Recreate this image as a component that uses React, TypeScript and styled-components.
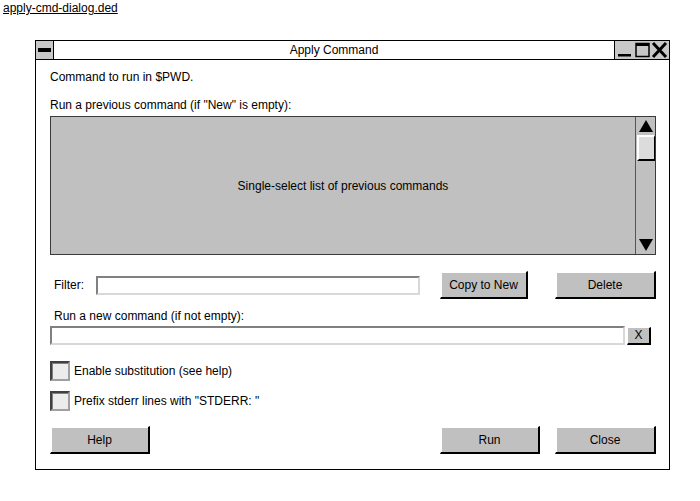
import React from 'react';
import styled, { createGlobalStyle } from 'styled-components';

const Global = createGlobalStyle`
  body {
    margin: 0;
    background: #fff;
    font-family: "Liberation Sans", Arial, sans-serif;
    font-size: 12px;
    color: #000;
  }
`;

const Page = styled.div`
  width: 700px;
  height: 501px;
  position: relative;
`;

const FileLink = styled.a`
  display: block;
  padding: 1px 0 0 3px;
  height: 14px;
  line-height: 14px;
  color: #000;
  text-decoration: underline;
  font-size: 12px;
`;

const Window = styled.div`
  margin: 25px 0 0 35px;
  width: 633px;
  height: 428px;
  border: 1px solid #000;
  display: flex;
  flex-direction: column;
`;

const TitleBar = styled.div`
  height: 18px;
  border-bottom: 1px solid #000;
  display: flex;
  align-items: stretch;
`;

const TitleButton = styled.div<{ $w: number; $left?: boolean }>`
  width: ${(p) => p.$w}px;
  background: #c8c8c8;
  border-right: ${(p) => (p.$left ? '1px solid #000' : 'none')};
  display: flex;
  align-items: center;
  justify-content: center;
`;

const Title = styled.div`
  flex: 1;
  text-align: center;
  line-height: 18px;
  font-size: 12px;
  border-right: 1px solid #000;
`;

const Content = styled.div`
  padding: 10px 13px 0 14px;
  display: flex;
  flex-direction: column;
`;

const Text = styled.div<{ $mt?: number; $indent?: number }>`
  line-height: 14px;
  margin-top: ${(p) => p.$mt ?? 0}px;
  padding-left: ${(p) => p.$indent ?? 0}px;
`;

const List = styled.div`
  margin-top: 4px;
  height: 137px;
  border: 1px solid #3a3a3a;
  background: #c0c0c0;
  display: flex;
`;

const ListBody = styled.div`
  flex: 1;
  display: flex;
  align-items: center;
  justify-content: center;
  padding-top: 1px;
`;

const ScrollBar = styled.div`
  width: 19px;
  border-left: 1px solid #555;
  background: #c0c0c0;
  display: flex;
  flex-direction: column;
  align-items: center;
`;

const Arrow = styled.div<{ $down?: boolean }>`
  margin-top: ${(p) => (p.$down ? 'auto' : '3px')};
  margin-bottom: ${(p) => (p.$down ? '3px' : '0')};
  width: 0;
  height: 0;
  border-left: 7px solid transparent;
  border-right: 7px solid transparent;
  ${(p) =>
    p.$down ? 'border-top: 12px solid #000;' : 'border-bottom: 12px solid #000;'}
`;

const Thumb = styled.div`
  margin-top: 3px;
  width: 15px;
  height: 22px;
  background: #dcdcdc;
  border-top: 2px solid #fff;
  border-left: 2px solid #fff;
  border-right: 1px solid #000;
  border-bottom: 2px solid #000;
`;

const Row = styled.div<{ $mt: number }>`
  margin-top: ${(p) => p.$mt}px;
  display: flex;
  align-items: center;
`;

const Label = styled.span`
  width: 42px;
  padding-left: 4px;
`;

const Field = styled.div<{ $w: number; $h: number }>`
  width: ${(p) => p.$w}px;
  height: ${(p) => p.$h}px;
  box-sizing: border-box;
  background: #fff;
  border-top: 2px solid #808080;
  border-left: 2px solid #808080;
  border-right: 2px solid #d8d8d8;
  border-bottom: 2px solid #d8d8d8;
`;

const Button = styled.div<{ $w: number; $ml?: number }>`
  width: ${(p) => p.$w}px;
  height: 28px;
  box-sizing: border-box;
  margin-left: ${(p) => p.$ml ?? 0}px;
  background: #c0c0c0;
  border-top: 1px solid #fff;
  border-left: 1px solid #fff;
  border-right: 2px solid #000;
  border-bottom: 2px solid #000;
  box-shadow: inset 1px 1px 0 #fff;
  display: flex;
  align-items: center;
  justify-content: center;
  font-size: 12px;
`;

const SmallButton = styled.div`
  width: 24px;
  height: 18px;
  margin-left: 2px;
  box-sizing: border-box;
  background: #c0c0c0;
  border-top: 1px solid #fff;
  border-left: 1px solid #fff;
  border-right: 2px solid #000;
  border-bottom: 2px solid #000;
  display: flex;
  align-items: center;
  justify-content: center;
  font-size: 12px;
`;

const Check = styled.div`
  width: 20px;
  height: 20px;
  box-sizing: border-box;
  background: #ececec;
  border-top: 2px solid #404040;
  border-left: 2px solid #404040;
  border-right: 2px solid #a0a0a0;
  border-bottom: 2px solid #a0a0a0;
  box-shadow: inset 1px 1px 0 #808080;
  margin-right: 4px;
`;

const Spacer = styled.div`
  flex: 1;
`;

const App: React.FC = () => (
  <Page>
    <Global />
    <FileLink href="#">apply-cmd-dialog.ded</FileLink>
    <Window>
      <TitleBar>
        <TitleButton $w={17} $left>
          <svg width="13" height="4">
            <rect width="13" height="4" fill="#000" />
          </svg>
        </TitleButton>
        <Title>Apply Command</Title>
        <TitleButton $w={54}>
          <svg width="54" height="18" viewBox="0 0 54 18">
            <rect x="3" y="13" width="13" height="2.5" fill="#000" />
            <rect x="21" y="2.5" width="13" height="13" fill="none" stroke="#000" strokeWidth="1.5" />
            <rect x="21" y="2" width="13" height="3" fill="#000" />
            <path d="M38 2 L51 16 M51 2 L38 16" stroke="#000" strokeWidth="3" />
          </svg>
        </TitleButton>
      </TitleBar>
      <Content>
        <Text>Command to run in $PWD.</Text>
        <Text $mt={14}>Run a previous command (if "New" is empty):</Text>
        <List>
          <ListBody>Single-select list of previous commands</ListBody>
          <ScrollBar>
            <Arrow />
            <Thumb />
            <Arrow $down />
          </ScrollBar>
        </List>
        <Row $mt={16}>
          <Label>Filter:</Label>
          <Field $w={324} $h={19} />
          <Button $w={88} $ml={20}>Copy to New</Button>
          <Button $w={101} $ml={27}>Delete</Button>
        </Row>
        <Text $mt={10} $indent={4}>Run a new command (if not empty):</Text>
        <Row $mt={3}>
          <Field $w={575} $h={19} />
          <SmallButton>X</SmallButton>
        </Row>
        <Row $mt={16}>
          <Check />
          Enable substitution (see help)
        </Row>
        <Row $mt={10}>
          <Check />
          Prefix stderr lines with "STDERR: "
        </Row>
        <Row $mt={15}>
          <Button $w={100}>Help</Button>
          <Spacer />
          <Button $w={100}>Run</Button>
          <Button $w={101} $ml={15}>Close</Button>
        </Row>
      </Content>
    </Window>
  </Page>
);

export default App;
